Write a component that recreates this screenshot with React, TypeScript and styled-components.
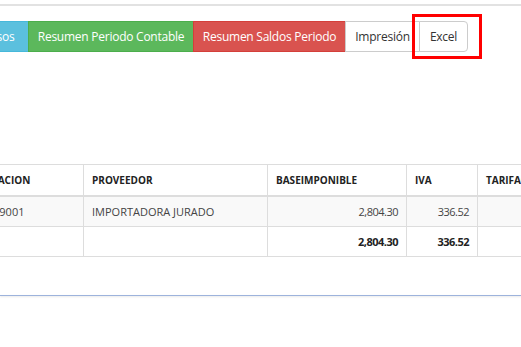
import React from "react";
import styled, { createGlobalStyle } from "styled-components";

const GlobalStyle = createGlobalStyle`
  html, body {
    margin: 0;
    padding: 0;
    background: #fff;
    font-family: "Open Sans", "Noto Sans", "Liberation Sans", sans-serif;
    color: #333;
    overflow: hidden;
  }
`;

const Page = styled.div`
  width: 521px;
  height: 347px;
  overflow: hidden;
  display: flex;
  flex-direction: column;
`;

const TopRule = styled.div`
  margin-top: 4px;
  height: 2px;
  background: #e2e2e2;
`;

const Toolbar = styled.div`
  display: flex;
  margin-top: 15px;
  margin-left: -41px;
`;

const variants = {
  info: { bg: "#5bc0de", border: "#46b8da", color: "#fff" },
  success: { bg: "#5cb85c", border: "#4cae4c", color: "#fff" },
  danger: { bg: "#d9534f", border: "#d43f3a", color: "#fff" },
  default: { bg: "#fff", border: "#ccc", color: "#333" },
};

type Variant = keyof typeof variants;

const Btn = styled.button<{ $variant: Variant; $w: number; $last?: boolean }>`
  box-sizing: border-box;
  width: ${(p) => p.$w}px;
  height: 31px;
  padding: 0;
  margin: 0 0 0 -1px;
  font-family: inherit;
  font-size: 12px;
  letter-spacing: -0.25px;
  line-height: 29px;
  text-align: center;
  white-space: nowrap;
  overflow: hidden;
  background: ${(p) => variants[p.$variant].bg};
  border: 1px solid ${(p) => variants[p.$variant].border};
  color: ${(p) => variants[p.$variant].color};
  border-radius: ${(p) => (p.$last ? "0 4px 4px 0" : "0")};
`;

const Marked = styled.span`
  position: relative;
  display: flex;
`;

const Highlight = styled.span`
  position: absolute;
  left: -8px;
  top: -7px;
  right: -14px;
  bottom: -7px;
  border: 3px solid #ff0000;
  pointer-events: none;
`;

const TableWrap = styled.div`
  margin-top: 112px;
  overflow: hidden;
`;

const Grid = styled.table`
  border-collapse: collapse;
  margin-left: -60px;
  width: 637px;
  table-layout: fixed;
  font-size: 11px;
`;

const Th = styled.th`
  height: 30px;
  padding: 0 8px;
  text-align: left;
  font-size: 10px;
  font-weight: 700;
  color: #222;
  white-space: nowrap;
  overflow: hidden;
  border: 1px solid #ddd;
  border-bottom-width: 2px;
`;

const Row = styled.tr<{ $striped?: boolean }>`
  background: ${(p) => (p.$striped ? "#f9f9f9" : "#fff")};
`;

const Td = styled.td<{ $num?: boolean; $bold?: boolean }>`
  height: 29px;
  padding: 0 8px;
  text-align: ${(p) => (p.$num ? "right" : "left")};
  font-weight: ${(p) => (p.$bold ? 700 : 400)};
  letter-spacing: ${(p) => (p.$num ? "-0.5px" : "0")};
  color: ${(p) => (p.$bold ? "#222" : "#444")};
  white-space: nowrap;
  overflow: hidden;
  border: 1px solid #ddd;
`;

const PanelEdge = styled.div`
  margin-top: 38px;
  height: 1px;
  background: #9db3dc;
  box-shadow: 0 1px 2px rgba(0, 0, 0, 0.12);
`;

const columns = [
  { label: "IDENTIFICACION", w: 143 },
  { label: "PROVEEDOR", w: 184 },
  { label: "BASEIMPONIBLE", w: 139 },
  { label: "IVA", w: 71 },
  { label: "TARIFA0", w: 100 },
];

export default function App() {
  return (
    <Page>
      <GlobalStyle />
      <TopRule />
      <Toolbar>
        <Btn $variant="info" $w={71}>Egresos</Btn>
        <Btn $variant="success" $w={166}>Resumen Periodo Contable</Btn>
        <Btn $variant="danger" $w={153}>Resumen Saldos Periodo</Btn>
        <Btn $variant="default" $w={75}>Impresión</Btn>
        <Marked>
          <Btn $variant="default" $w={49} $last>Excel</Btn>
          <Highlight />
        </Marked>
      </Toolbar>
      <TableWrap>
        <Grid>
          <colgroup>
            {columns.map((c) => (
              <col key={c.label} style={{ width: c.w }} />
            ))}
          </colgroup>
          <thead>
            <tr>
              {columns.map((c) => (
                <Th key={c.label}>{c.label}</Th>
              ))}
            </tr>
          </thead>
          <tbody>
            <Row $striped>
              <Td>179214929001</Td>
              <Td>IMPORTADORA JURADO</Td>
              <Td $num>2,804.30</Td>
              <Td $num>336.52</Td>
              <Td $num></Td>
            </Row>
            <Row>
              <Td></Td>
              <Td></Td>
              <Td $num $bold>2,804.30</Td>
              <Td $num $bold>336.52</Td>
              <Td $num></Td>
            </Row>
          </tbody>
        </Grid>
      </TableWrap>
      <PanelEdge />
    </Page>
  );
}
